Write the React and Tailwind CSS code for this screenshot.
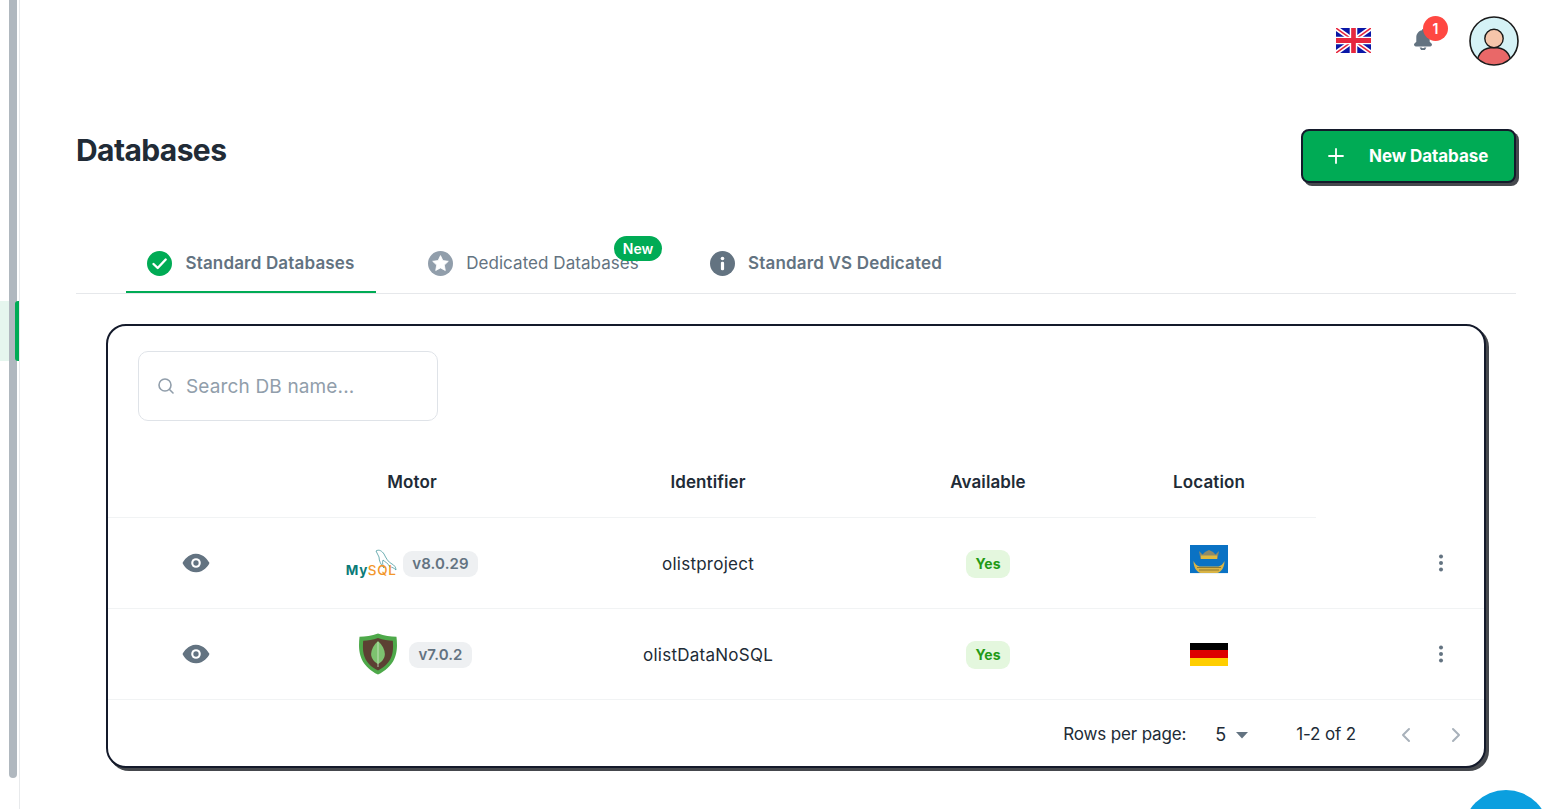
import React from "react";

const font = { fontFamily: "Inter, 'Liberation Sans', sans-serif" };

function UKFlag() {
  return (
    <svg width="35" height="25" viewBox="0 0 60 42" preserveAspectRatio="none">
      <rect width="60" height="42" fill="#0a17a7" />
      <path d="M0 0L60 42M60 0L0 42" stroke="#fff" strokeWidth="8" />
      <path d="M0 0L60 42M60 0L0 42" stroke="#e6273e" strokeWidth="2.5" />
      <path d="M30 0V42M0 21H60" stroke="#fff" strokeWidth="13" />
      <path d="M30 0V42M0 21H60" stroke="#e6273e" strokeWidth="8" />
    </svg>
  );
}

function Bell() {
  return (
    <svg width="24" height="24" viewBox="0 0 24 24" fill="#637381">
      <path d="M20.5 15.5l-1.8-1.8V9.3c0-3.4-2.4-6.4-5.7-7V2a1 1 0 0 0-2 0v.3C7.7 2.9 5.3 5.9 5.3 9.3v4.4l-1.8 1.8a1.7 1.7 0 0 0 1.2 2.9h14.6a1.7 1.7 0 0 0 1.2-2.9z" />
      <path d="M8.6 19.4a3.5 3.5 0 0 0 6.8 0h-2a1.6 1.6 0 0 1-2.8 0z" />
    </svg>
  );
}

function Avatar() {
  return (
    <svg width="50" height="50" viewBox="0 0 50 50">
      <defs>
        <clipPath id="avc"><circle cx="25" cy="25" r="23.7" /></clipPath>
      </defs>
      <circle cx="25" cy="25" r="24" fill="#d5f2f6" />
      <g clipPath="url(#avc)">
        <path d="M8 47c1-11 8-15.5 17-15.5S41 36 42 47v4H8z" fill="#e96868" stroke="#1a1a1a" strokeWidth="1.4" />
        <circle cx="25" cy="22.5" r="9.2" fill="#f5c5aa" stroke="#1a1a1a" strokeWidth="1.4" />
      </g>
      <circle cx="25" cy="25" r="24" fill="none" stroke="#1a1a1a" strokeWidth="1.6" />
    </svg>
  );
}

function CheckCircle() {
  return (
    <svg width="25" height="25" viewBox="0 0 25 25">
      <circle cx="12.5" cy="12.5" r="12.5" fill="#00ab55" />
      <path d="M6.5 13l4.2 4 8-8.5" fill="none" stroke="#fff" strokeWidth="2.4" strokeLinecap="round" strokeLinejoin="round" />
    </svg>
  );
}

function StarCircle() {
  return (
    <svg width="25" height="25" viewBox="0 0 25 25">
      <circle cx="12.5" cy="12.5" r="12.5" fill="#919eab" />
      <path d="M12.5 4.6l2.4 5 5.4.7-4 3.8 1 5.4-4.8-2.6-4.8 2.6 1-5.4-4-3.8 5.4-.7z" fill="#fff" stroke="#fff" strokeWidth="0.8" strokeLinejoin="round" />
    </svg>
  );
}

function InfoCircle() {
  return (
    <svg width="25" height="25" viewBox="0 0 25 25">
      <circle cx="12.5" cy="12.5" r="12.5" fill="#637381" />
      <circle cx="12.5" cy="7.5" r="1.8" fill="#fff" />
      <rect x="10.9" y="10.8" width="3.2" height="8.4" rx="1.3" fill="#fff" />
    </svg>
  );
}

function Eye() {
  return (
    <svg width="32" height="32" viewBox="0 0 24 24" fill="#637381">
      <path d="M21.87 11.5C21.23 10.39 17.71 4.82 11.73 5c-5.53.14-8.73 5-9.6 6.5a1 1 0 0 0 0 1c.63 1.09 4 6.5 9.89 6.5h.25c5.53-.14 8.74-5 9.6-6.5a1 1 0 0 0 0-1z" />
      <circle cx="12" cy="12" r="3.6" fill="#fff" />
      <circle cx="12" cy="12" r="2" fill="#637381" />
    </svg>
  );
}

function Dots() {
  return (
    <svg width="20" height="20" viewBox="0 0 20 20" fill="#637381">
      <circle cx="10" cy="3.5" r="2" />
      <circle cx="10" cy="10" r="2" />
      <circle cx="10" cy="16.5" r="2" />
    </svg>
  );
}

function MySQLLogo() {
  return (
    <div className="relative w-[52px] h-[30px]">
      <svg className="absolute left-0 top-0" width="52" height="30" viewBox="0 0 52 30" fill="none">
        <path d="M30 3C33 1 36 3 38 6C40 10 42 14 46 16C48 17 50 19 50 22C48 20 46 19 44 19C42 15 39 14 37 12C36 15 37 18 38 20C35 17 33 13 33 9C32 7 31 5 30 3z" stroke="#4a9aa0" strokeWidth="0.8" />
      </svg>
      <div className="absolute left-0 bottom-[1px] flex items-baseline text-[13.5px] leading-[13px] tracking-[0.6px]">
        <span className="text-[#0a7a78] font-bold">My</span>
        <span className="text-[#f2962a] font-medium">SQL</span>
      </div>
    </div>
  );
}

function MongoLogo() {
  return (
    <svg width="38" height="42" viewBox="1 0 36 42" preserveAspectRatio="none">
      <path d="M19 .5c6 2.6 12 3 17.5 3.2C38 18 37 32 19 41.5 1 32 0 18 1.500 3.700 7 3.500 13 3.100 19 .5z" fill="#4ea94a" />
      <path d="M19 5c5 2 9.500 2.500 14 2.700C34 19 33 30 19 37.500 5 30 4 19 5 7.700 9.500 7.500 14 7 19 5z" fill="#5c4033" />
      <path d="M19 8c4 4 6.500 8.500 6.500 13 0 4.500-3 8-6.500 10-3.500-2-6.500-5.500-6.500-10 0-4.500 2.500-9 6.500-13z" fill="#7dc26f" />
      <path d="M19 9v25" stroke="#cfe8c8" strokeWidth="0.8" />
    </svg>
  );
}

function HelsinkiFlag() {
  return (
    <svg width="38" height="29" viewBox="0 0 38 29">
      <rect width="38" height="29" fill="#0a72c4" />
      <path d="M9 6l3.500 3.500L15 7l4-2 4 2 2.500 2.500L29 6l-1.500 8h-17z" fill="#8f8a6a" />
      <rect x="11" y="10.500" width="16" height="3.500" fill="#e0b93f" />
      <path d="M3.500 16c1.500 3 3.500 5 6 5.500h19c2.500-.5 4.500-2.500 6-5.500 0 6-3 11-7 12H10.500c-4-1-7-6-7-12z" fill="#d9b445" />
      <path d="M7 22.500h24M9 25h20" stroke="#7a6a30" strokeWidth="0.8" />
      <path d="M0 28h38v1H0z" fill="#e8f2fa" />
    </svg>
  );
}

function GermanyFlag() {
  return (
    <div className="w-[38px] h-[23px] flex flex-col">
      <div className="flex-1 bg-black" />
      <div className="flex-1 bg-[#dd0000]" />
      <div className="flex-1 bg-[#ffce00]" />
    </div>
  );
}

function Tab({ icon, label, active, muted, className, children }) {
  return (
    <div className={"relative flex items-center justify-center gap-[13px] h-[60px] pt-[2px] border-b-2 " + (active ? "border-[#00ab55] " : "border-transparent ") + className}>
      {icon}
      <span className={"mt-[2px] text-[17px] text-[#637381] " + (muted ? "font-normal tracking-[0.05px]" : "font-semibold tracking-[0.17px]")}>{label}</span>
      {children}
    </div>
  );
}

const grid = "grid grid-cols-[176px_256px_336px_224px_218px_1fr] items-center";

function Row({ logo, version, identifier, flag, gap, motorClass, flagClass }) {
  return (
    <div className={grid + " h-[91px] border-b border-[#f1f3f4]"}>
      <div className="flex justify-center"><Eye /></div>
      <div className={"flex justify-center items-center " + gap + " " + motorClass}>
        {logo}
        <span className="h-[26px] px-[9.5px] rounded-[9px] bg-[#eef0f2] text-[#637381] text-[15px] font-semibold tracking-[0.1px] flex items-center mt-[2px]">{version}</span>
      </div>
      <div className="text-center text-[17px] tracking-[0.25px] text-[#212b36] mt-[4px]">{identifier}</div>
      <div className="flex justify-center mt-[1px]">
        <span className="h-[28px] px-[9.5px] rounded-[9px] bg-[#e4f7de] text-[#229a16] text-[14px] tracking-[0.1px] font-bold flex items-center">Yes</span>
      </div>
      <div className={"flex justify-center " + flagClass}>{flag}</div>
      <div className="flex justify-end pr-[33px]"><Dots /></div>
    </div>
  );
}

export default function App() {
  return (
    <div className="relative flex w-[1556px] h-[809px] overflow-hidden bg-white text-[#212b36]" style={font}>
      <aside className="relative w-[20px] shrink-0 border-r border-[#e8eaec]">
        <div className="absolute left-0 top-[301px] w-[19px] h-[60px] bg-[#00ab55]/10" />
        <div className="absolute left-[9px] top-0 w-[8px] h-[778px] bg-[#b0b8bf] rounded-b-[4px]" />
        <div className="absolute left-[15px] top-[301px] w-[4px] h-[60px] bg-[#00ab55] rounded-l-[3px]" />
      </aside>

      <main className="flex-1 pl-[56px] pr-[40px]">
        <header className="h-[82px] pt-[16px] flex items-start justify-end gap-[38px] mr-[-3px]">
          <div className="mt-[12px] mr-[2px]"><UKFlag /></div>
          <div className="relative mt-[12px] mr-[-4px]">
            <Bell />
            <span className="absolute left-[12px] top-[-12px] w-[25px] h-[25px] rounded-full bg-[#ff4842] text-white text-[14px] font-semibold flex items-center justify-center">1</span>
          </div>
          <Avatar />
        </header>

        <div className="flex items-start justify-between h-[151px] pt-[47px]">
          <h1 className="text-[30px] leading-[44px] mt-[-1px] font-bold tracking-[-0.6px] text-[#212b36]">Databases</h1>
          <button className="w-[215px] h-[54px] rounded-[8px] bg-[#00ab55] border-2 border-[#141a2b] shadow-[3px_3px_0_0_#45484d] text-white flex items-center pl-[24px]">
            <svg width="18" height="18" viewBox="0 0 18 18" stroke="#fff" strokeWidth="1.8" strokeLinecap="round"><path d="M9 2v14M2 9h14" /></svg>
            <span className="ml-[24px] pt-[2px] text-[17px] font-bold tracking-[-0.07px]">New Database</span>
          </button>
        </div>

        <nav className="flex h-[61px] border-b border-[#e6e8eb] pl-[50px]">
          <Tab className="w-[250px]" active icon={<CheckCircle />} label="Standard Databases" />
          <Tab className="w-[315px]" muted icon={<StarCircle />} label="Dedicated Databases">
            <span className="absolute left-[238px] top-[3px] w-[48px] h-[25px] rounded-full bg-[#00ab55] text-white text-[14px] font-semibold flex items-center justify-center">New</span>
          </Tab>
          <Tab className="w-[270px]" icon={<InfoCircle />} label="Standard VS Dedicated" />
        </nav>

        <section className="mt-[30px] ml-[30px] w-[1380px] h-[444px] rounded-[20px] border-2 border-[#141a2b] shadow-[3px_3px_0_0_#45484d] bg-white overflow-hidden">
          <div className="pt-[25px] pl-[30px]">
            <div className="w-[300px] h-[70px] rounded-[10px] border border-[#dfe3e8] flex items-center pl-[18px] gap-[11px]">
              <svg width="18" height="18" viewBox="0 0 18 18" fill="none" stroke="#919eab" strokeWidth="1.6" strokeLinecap="round"><circle cx="8" cy="8" r="6" /><path d="M12.500 12.500L16 16" /></svg>
              <span className="mt-[2px] text-[19px] tracking-[0.15px] text-[#919eab]">Search DB name...</span>
            </div>
          </div>

          <div className={"mt-[26px] w-[1208px] h-[71px] pt-[2px] border-b border-[#f1f3f4] text-[17px] font-semibold tracking-[0.1px] text-[#212b36] grid grid-cols-[176px_256px_336px_224px_216px] items-center"}>
            <div />
            <div className="text-center">Motor</div>
            <div className="text-center">Identifier</div>
            <div className="text-center">Available</div>
            <div className="text-center pl-[2px]">Location</div>
          </div>

          <Row logo={<MySQLLogo />} version="v8.0.29" identifier="olistproject" gap="gap-[5px]" motorClass="" flagClass="mb-[8px]" flag={<HelsinkiFlag />} />
          <Row logo={<MongoLogo />} version="v7.0.2" identifier="olistDataNoSQL" gap="gap-[12px]" motorClass="pl-[7px]" flagClass="" flag={<GermanyFlag />} />

          <div className="h-[67px] pt-[2px] flex items-center justify-end pr-[20px] text-[17px] tracking-[-0.15px] text-[#212b36]">
            <span>Rows per page:</span>
            <span className="ml-[29px] text-[18px] tracking-normal">5</span>
            <svg className="ml-[9px]" width="14" height="8" viewBox="0 0 14 8" fill="#637381"><path d="M1 1h12L7 7.500z" /></svg>
            <span className="ml-[47px]">1-2 of 2</span>
            <svg className="ml-[42px]" width="16" height="18" viewBox="0 0 16 18" fill="none" stroke="#a8b1ba" strokeWidth="2" strokeLinecap="round" strokeLinejoin="round"><path d="M11 3L5 9l6 6" /></svg>
            <svg className="ml-[34px]" width="16" height="18" viewBox="0 0 16 18" fill="none" stroke="#a8b1ba" strokeWidth="2" strokeLinecap="round" strokeLinejoin="round"><path d="M5 3l6 6-6 6" /></svg>
          </div>
        </section>
      </main>

      <div className="absolute left-[1463px] top-[790px] w-[86px] h-[86px] rounded-full bg-[#0b9fdf]" />
    </div>
  );
}
